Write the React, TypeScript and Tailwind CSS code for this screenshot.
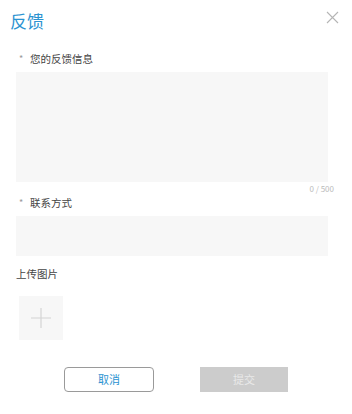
import React, { useState } from 'react'

const font = { fontFamily: '"Noto Sans CJK SC", "Noto Sans", sans-serif' }

export default function App() {
    const [text, setText] = useState('')
    const [contact, setContact] = useState('')
    return (
        <div className='relative w-[352px] h-[414px] bg-white text-[#333]' style={font}>
            <div className='flex items-start justify-between pl-[10px] pr-[13px] pt-[10px]'>
                <h1 className='text-[17px] leading-[22px] text-[#2b93d1]'>反馈</h1>
                <button className='mt-[1px] text-[#b5b5b5]'>
                    <svg width='13' height='13' viewBox='0 0 13 13' fill='none' stroke='currentColor' strokeWidth='1.1'>
                        <path d='M1 1 L12 12 M12 1 L1 12' />
                    </svg>
                </button>
            </div>

            <div className='px-4'>
                <div className='mt-[20px] flex items-center h-[14px] text-[10.5px] leading-[14px] text-[#444]'>
                    <span className='w-[14px] pl-[3px] text-[#999] text-[9px]'>*</span>
                    <span>您的反馈信息</span>
                </div>
                <textarea
                    value={text}
                    onChange={(e) => setText(e.target.value)}
                    maxLength={500}
                    className='mt-[6px] block w-[312px] h-[110px] resize-none bg-[#f7f7f7] outline-none p-2 text-[11px]'
                />
                <div className='flex justify-end pr-[2px] mt-[2px] h-[10px] text-[8px] leading-[10px] text-[#bbb]'>
                    {text.length} / 500
                </div>

                <div className='mt-[2px] flex items-center h-[14px] text-[10.5px] leading-[14px] text-[#444]'>
                    <span className='w-[14px] pl-[3px] text-[#999] text-[9px]'>*</span>
                    <span>联系方式</span>
                </div>
                <input
                    value={contact}
                    onChange={(e) => setContact(e.target.value)}
                    className='mt-[6px] block w-[312px] h-[40px] bg-[#f7f7f7] outline-none px-2 text-[11px]'
                />

                <div className='mt-[11px] h-[14px] text-[10.5px] leading-[14px] text-[#444]'>上传图片</div>
                <button className='mt-[15px] ml-[3px] flex items-center justify-center w-[44px] h-[44px] bg-[#f7f7f7] text-[#d4d4d4]'>
                    <svg width='20' height='20' viewBox='0 0 20 20' fill='none' stroke='currentColor' strokeWidth='1.2'>
                        <path d='M10 0 V20 M0 10 H20' />
                    </svg>
                </button>
            </div>

            <div className='mt-[27px] flex justify-center gap-[46px]'>
                <button className='w-[90px] h-[25px] rounded-[4px] border border-[#9a9a9a] bg-white text-[11px] text-[#2b93d1]'>
                    取消
                </button>
                <button className='w-[88px] h-[25px] bg-[#cccccc] text-[11px] text-[#e9e9e9]'>
                    提交
                </button>
            </div>
        </div>
    )
}
